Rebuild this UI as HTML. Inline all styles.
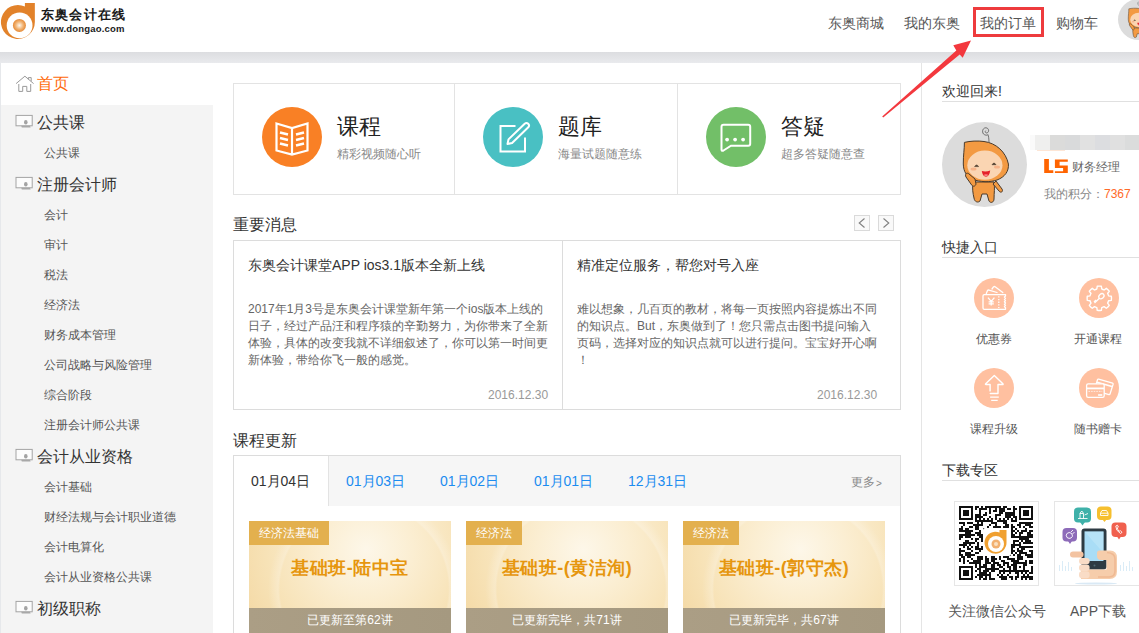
<!DOCTYPE html>
<html><head><meta charset="utf-8">
<style>
*{box-sizing:border-box;margin:0;padding:0}
html,body{width:1139px;height:633px;overflow:hidden;background:#fff}
body{position:relative;font-family:"Liberation Sans",sans-serif;color:#333}
.a{position:absolute;white-space:nowrap}
.t14{font-size:14px;line-height:14px}
.t12{font-size:12px;line-height:12px}
.t16{font-size:16px;line-height:16px}
.sh{left:37px;font-size:16px;line-height:16px;color:#333}
.ss{left:44px;font-size:12px;line-height:12px;color:#555}

.news{font-size:12px;line-height:17px;color:#666}
.date{font-size:12px;line-height:12px;color:#999}
.tab{top:474px;color:#1b8cf0}
.card{top:521px;width:202px;height:130px;overflow:hidden;background:radial-gradient(circle at 57% 52%,rgba(255,255,255,0) 0,rgba(255,255,255,0) 84px,rgba(255,255,255,0.22) 86px,rgba(255,255,255,0) 96px),radial-gradient(circle at 58% 22%,#fdf7e9 0,#fbeed2 30%,#f7e2b6 65%,#f2d49c 100%)}
.card .lbl{position:absolute;left:0;top:0;height:24px;padding:0 10px;background:#e3b04e;color:#fff;font-size:12px;line-height:24px}
.card .ttl{position:absolute;left:0;top:38px;width:202px;text-align:center;font-size:18px;line-height:18px;font-weight:bold;color:#e6960e;letter-spacing:0.5px}
.card .bot{position:absolute;left:0;top:87px;width:202px;height:30px;text-align:center;background:linear-gradient(90deg,#ab9e85,#a59980);color:#fff;font-size:12px;line-height:25px}
</style></head><body>

<!-- header -->
<svg class="a" style="left:0;top:0" width="40" height="42" viewBox="0 0 40 42">
  <defs>
    <radialGradient id="lg" cx="50%" cy="50%" r="50%"><stop offset="0" stop-color="#fff8ee"/><stop offset="0.55" stop-color="#f2b77a"/><stop offset="1" stop-color="#e68a35"/></radialGradient>
  </defs>
  <path d="M24.9 3 H34.85 V22 A16.95 16.95 0 1 1 24.9 6.56 Z" fill="#e2822a"/>
  <circle cx="19.6" cy="25.4" r="12.9" fill="#fff"/>
  <circle cx="19.4" cy="25.4" r="6.5" fill="url(#lg)"/>
</svg>
<div class="a" style="left:41px;top:8px;font-size:13px;line-height:13px;font-weight:bold;color:#1a1a1a;letter-spacing:1.2px">东奥会计在线</div>
<div class="a" style="left:41px;top:24px;font-size:9.5px;line-height:9.5px;font-weight:bold;color:#1a1a1a;letter-spacing:0.2px">www.dongao.com</div>

<div class="a t14" style="left:828px;top:16px;color:#555">东奥商城</div>
<div class="a t14" style="left:904px;top:16px;color:#555">我的东奥</div>
<div class="a t14" style="left:980px;top:16px;color:#555">我的订单</div>
<div class="a t14" style="left:1056px;top:16px;color:#555">购物车</div>
<div class="a" style="left:973px;top:7px;width:71px;height:30px;border:3px solid #ee3b3d"></div>

<!-- top avatar -->
<svg class="a" style="left:1118px;top:-1px" width="41" height="41" viewBox="0 0 85 85">
  <circle cx="42.5" cy="42.5" r="42.5" fill="#dcdcdc"/>
  <path d="M47 20.5 C47 17 46.5 14 46 12.5 C45.5 13.5 43 13.5 41.5 12 C39.5 9.5 41 5.5 44 5.8 C47 6 47.5 10 45 11 C43.5 11.3 42.5 9.5 43.8 8.6" fill="none" stroke="#666" stroke-width="0.9"/>
  <g stroke="#4a3b2c" stroke-width="1" stroke-linejoin="round">
    <path d="M31 60 C30 66 31 72 32 76 C32.5 80 36 81 38 79 L40 72 L45 72 L47 79 C48.5 81.5 52 80.5 52 77 C52 71 53 66 52 60 Z" fill="#f39a42"/>
    <path d="M51 62 L57 69 C59 71.5 61.5 69.5 60 67 L54 59 Z" fill="#f39a42"/>
    <path d="M22.4 20.4 C28 19 36 18.6 42 19.5 C54 21 64 30 66.4 42 C67 49 63 55 55 58 C48 60.5 38 60 31 57.5 C25 55 21.5 50 21.3 42 C21.2 33 22.5 27 22.4 20.4 Z" fill="#f39a42"/>
    <path d="M33 57 L27 52 C25 50 22.5 52 24 55 L30 63.5 C31.5 65 33.5 64 34 62 Z" fill="#f39a42"/>
  </g>
  <ellipse cx="42.9" cy="43.2" rx="17.6" ry="14.6" fill="#fad5b2"/>
  <path d="M32.6 44.6 Q34.6 41.4 36.6 44.6 Z M50 42.7 Q52 39.5 54 42.7 Z" fill="#4a3b2c" stroke="#4a3b2c" stroke-width="0.6"/>
  <path d="M39.8 49 Q44 50 48.2 48.5 Q47.5 54.5 44 54.8 Q40.5 54.6 39.8 49 Z" fill="#e5222a"/>
  <path d="M41.5 53 Q44 51.5 46.5 53 Q44 55 41.5 53Z" fill="#f98a8a"/>
  <ellipse cx="31.5" cy="47" rx="3" ry="1.6" fill="#f6b389"/>
  <ellipse cx="55" cy="45" rx="3" ry="1.6" fill="#f6b389"/>
</svg>

<!-- gray band -->
<div class="a" style="left:0;top:52px;width:1139px;height:11px;background:linear-gradient(#dcdde0,#e9eaed)"></div>
<div class="a" style="left:0;top:63px;width:1px;height:570px;background:#e6e8eb"></div>

<!-- sidebar -->
<div class="a" style="left:1px;top:105px;width:212px;height:528px;background:#f4f4f4"></div>

<svg class="a" style="left:15px;top:75px" width="20" height="18" viewBox="15 75 20 18"><path d="M16.1 83.6 L24.9 76.2 L33.6 83.6 M18.8 84 V91.4 H22.7 V86.4 H26.8 V91.4 H30.7 V84 M28.4 79.5 V77.6 H31.2 V81.3" fill="none" stroke="#9a9a9a" stroke-width="1"/></svg>
<div class="a sh" style="top:76px;color:#ff6a0a">首页</div>
<div class="a sh" style="top:115px">公共课</div>
<svg class="a" style="left:15px;top:114px" width="18" height="15" viewBox="0 0 18 15"><rect x="1" y="1.4" width="16.2" height="10.4" fill="#fcfcfc" stroke="#a3a3a3" stroke-width="1"/><ellipse cx="10.8" cy="8.3" rx="1.8" ry="2.3" fill="#a3a3a3"/><path d="M6.2 11.8 L15 11.8 L15.6 13.6 L6.8 13.6 Z" fill="#a8a8a8"/></svg>
<div class="a ss" style="top:147px">公共课</div>
<div class="a sh" style="top:177px">注册会计师</div>
<svg class="a" style="left:15px;top:176px" width="18" height="15" viewBox="0 0 18 15"><rect x="1" y="1.4" width="16.2" height="10.4" fill="#fcfcfc" stroke="#a3a3a3" stroke-width="1"/><ellipse cx="10.8" cy="8.3" rx="1.8" ry="2.3" fill="#a3a3a3"/><path d="M6.2 11.8 L15 11.8 L15.6 13.6 L6.8 13.6 Z" fill="#a8a8a8"/></svg>
<div class="a ss" style="top:209px">会计</div>
<div class="a ss" style="top:239px">审计</div>
<div class="a ss" style="top:269px">税法</div>
<div class="a ss" style="top:299px">经济法</div>
<div class="a ss" style="top:329px">财务成本管理</div>
<div class="a ss" style="top:359px">公司战略与风险管理</div>
<div class="a ss" style="top:389px">综合阶段</div>
<div class="a ss" style="top:419px">注册会计师公共课</div>
<div class="a sh" style="top:449px">会计从业资格</div>
<svg class="a" style="left:15px;top:448px" width="18" height="15" viewBox="0 0 18 15"><rect x="1" y="1.4" width="16.2" height="10.4" fill="#fcfcfc" stroke="#a3a3a3" stroke-width="1"/><ellipse cx="10.8" cy="8.3" rx="1.8" ry="2.3" fill="#a3a3a3"/><path d="M6.2 11.8 L15 11.8 L15.6 13.6 L6.8 13.6 Z" fill="#a8a8a8"/></svg>
<div class="a ss" style="top:481px">会计基础</div>
<div class="a ss" style="top:511px">财经法规与会计职业道德</div>
<div class="a ss" style="top:541px">会计电算化</div>
<div class="a ss" style="top:571px">会计从业资格公共课</div>
<div class="a sh" style="top:601px">初级职称</div>
<svg class="a" style="left:15px;top:600px" width="18" height="15" viewBox="0 0 18 15"><rect x="1" y="1.4" width="16.2" height="10.4" fill="#fcfcfc" stroke="#a3a3a3" stroke-width="1"/><ellipse cx="10.8" cy="8.3" rx="1.8" ry="2.3" fill="#a3a3a3"/><path d="M6.2 11.8 L15 11.8 L15.6 13.6 L6.8 13.6 Z" fill="#a8a8a8"/></svg>

<!-- feature box -->
<div class="a" style="left:233px;top:83px;width:668px;height:112px;border:1px solid #e3e3e3"></div>
<div class="a" style="left:454px;top:84px;width:1px;height:110px;background:#e3e3e3"></div>
<div class="a" style="left:677px;top:84px;width:1px;height:110px;background:#e3e3e3"></div>

<svg class="a" style="left:262px;top:107px" width="60" height="60" viewBox="0 0 60 60">
  <circle cx="30" cy="30" r="30" fill="#f98025"/>
  <g fill="none" stroke="#fff" stroke-width="2.2" stroke-linejoin="miter">
    <path d="M14.5 16.5 L30 21 L45.5 16.5 V43.5 L30 47.5 L14.5 43.5 Z M30 21 V47.5"/>
    <path d="M18 25.5 L26 27.5 M18 31 L26 33 M18 36.5 L26 38.5 M34 27.5 L42 25.5 M34 33 L42 31 M34 38.5 L42 36.5" stroke-width="2.4"/>
  </g>
</svg>
<div class="a" style="left:337px;top:116px;font-size:22px;line-height:22px;color:#222">课程</div>
<div class="a t12" style="left:337px;top:148px;color:#888">精彩视频随心听</div>

<svg class="a" style="left:483px;top:107px" width="60" height="60" viewBox="0 0 60 60">
  <circle cx="30" cy="30" r="30" fill="#49c0c3"/>
  <g fill="none" stroke="#fff" stroke-width="2.2">
    <path d="M32.5 19 H17.5 V44.5 H42 V30.5" stroke-width="2"/>
    <path d="M24.5 37 L25.5 32.4 L41.7 16.7 A2.55 2.55 0 0 1 45.3 20.3 L29.1 36 Z" stroke-width="2" stroke-linejoin="round"/>
  </g>
</svg>
<div class="a" style="left:558px;top:116px;font-size:22px;line-height:22px;color:#222">题库</div>
<div class="a t12" style="left:558px;top:148px;color:#888">海量试题随意练</div>

<svg class="a" style="left:706px;top:107px" width="60" height="60" viewBox="0 0 60 60">
  <circle cx="30" cy="30" r="30" fill="#72bf68"/>
  <path d="M17.5 17.7 H42.2 Q44.2 17.7 44.2 19.7 V36.7 Q44.2 38.7 42.2 38.7 H25 L17.5 43.5 Q15.5 44.5 15.5 42.5 V19.7 Q15.5 17.7 17.5 17.7 Z" fill="none" stroke="#fff" stroke-width="2"/>
  <circle cx="21.1" cy="32.6" r="1.9" fill="#fff"/><circle cx="29.1" cy="32.6" r="1.9" fill="#fff"/><circle cx="37.1" cy="32.6" r="1.9" fill="#fff"/>
</svg>
<div class="a" style="left:781px;top:116px;font-size:22px;line-height:22px;color:#222">答疑</div>
<div class="a t12" style="left:781px;top:148px;color:#888">超多答疑随意查</div>

<!-- news -->
<div class="a t16" style="left:233px;top:217px;color:#333">重要消息</div>
<div class="a" style="left:854px;top:215px;width:16px;height:16px;border:1px solid #dadada;background:#f9f9f9"></div>
<div class="a" style="left:878px;top:215px;width:16px;height:16px;border:1px solid #dadada;background:#f9f9f9"></div>
<svg class="a" style="left:854px;top:215px" width="40" height="16" viewBox="0 0 40 16"><path d="M10.5 3.5 L5.2 8 L10.5 12.5 M29.5 3.5 L34.8 8 L29.5 12.5" fill="none" stroke="#808080" stroke-width="1.1"/></svg>

<div class="a" style="left:233px;top:240px;width:668px;height:170px;border:1px solid #dcdcdc"></div>
<div class="a" style="left:562px;top:241px;width:1px;height:168px;background:#dcdcdc"></div>

<div class="a t14" style="left:248px;top:258px;color:#333">东奥会计课堂APP ios3.1版本全新上线</div>
<div class="a news" style="left:248px;top:301px">2017年1月3号是东奥会计课堂新年第一个ios版本上线的<br>日子，经过产品汪和程序猿的辛勤努力，为你带来了全新<br>体验，具体的改变我就不详细叙述了，你可以第一时间更<br>新体验，带给你飞一般的感觉。</div>
<div class="a date" style="left:488px;top:389px">2016.12.30</div>

<div class="a t14" style="left:577px;top:258px;color:#333">精准定位服务，帮您对号入座</div>
<div class="a news" style="left:577px;top:301px">难以想象，几百页的教材，将每一页按照内容提炼出不同<br>的知识点。But，东奥做到了！您只需点击图书提问输入<br>页码，选择对应的知识点就可以进行提问。宝宝好开心啊<br>！</div>
<div class="a date" style="left:817px;top:389px">2016.12.30</div>

<!-- course update -->
<div class="a t16" style="left:233px;top:433px;color:#333">课程更新</div>
<div class="a" style="left:233px;top:455px;width:668px;height:200px;border:1px solid #dcdcdc"></div>
<div class="a" style="left:234px;top:456px;width:666px;height:50px;background:#f6f6f6"></div>
<div class="a" style="left:234px;top:456px;width:95px;height:50px;background:#fff;border-right:1px solid #e3e3e3"></div>
<div class="a t14" style="left:251px;top:474px;color:#333">01月04日</div>
<div class="a t14 tab" style="left:346px">01月03日</div>
<div class="a t14 tab" style="left:440px">01月02日</div>
<div class="a t14 tab" style="left:534px">01月01日</div>
<div class="a t14 tab" style="left:628px">12月31日</div>
<div class="a t12" style="left:851px;top:476px;color:#888">更多<span style="font-size:10px;margin-left:1px;position:relative;top:1px">&gt;</span></div>

<div class="a card" style="left:249px"><div class="lbl">经济法基础</div><div class="ttl">基础班-陆中宝</div><div class="bot">已更新至第62讲</div></div>
<div class="a card" style="left:466px"><div class="lbl">经济法</div><div class="ttl">基础班-(黄洁洵)</div><div class="bot">已更新完毕，共71讲</div></div>
<div class="a card" style="left:683px"><div class="lbl">经济法</div><div class="ttl">基础班-(郭守杰)</div><div class="bot">已更新完毕，共67讲</div></div>


<!-- right separator -->
<div class="a" style="left:921px;top:63px;width:1px;height:570px;background:#e5e5e5"></div>

<!-- right column -->
<div class="a t14" style="left:942px;top:84px;color:#333">欢迎回来!</div>
<div class="a" style="left:942px;top:101px;width:197px;height:1px;background:#e0e0e0"></div>

<svg class="a" style="left:942px;top:122px" width="85" height="85" viewBox="0 0 85 85">
  <circle cx="42.5" cy="42.5" r="42.5" fill="#dcdcdc"/>
  <path d="M47 20.5 C47 17 46.5 14 46 12.5 C45.5 13.5 43 13.5 41.5 12 C39.5 9.5 41 5.5 44 5.8 C47 6 47.5 10 45 11 C43.5 11.3 42.5 9.5 43.8 8.6" fill="none" stroke="#666" stroke-width="0.9"/>
  <g stroke="#4a3b2c" stroke-width="1" stroke-linejoin="round">
    <path d="M31 60 C30 66 31 72 32 76 C32.5 80 36 81 38 79 L40 72 L45 72 L47 79 C48.5 81.5 52 80.5 52 77 C52 71 53 66 52 60 Z" fill="#f39a42"/>
    <path d="M51 62 L57 69 C59 71.5 61.5 69.5 60 67 L54 59 Z" fill="#f39a42"/>
    <path d="M22.4 20.4 C28 19 36 18.6 42 19.5 C54 21 64 30 66.4 42 C67 49 63 55 55 58 C48 60.5 38 60 31 57.5 C25 55 21.5 50 21.3 42 C21.2 33 22.5 27 22.4 20.4 Z" fill="#f39a42"/>
    <path d="M33 57 L27 52 C25 50 22.5 52 24 55 L30 63.5 C31.5 65 33.5 64 34 62 Z" fill="#f39a42"/>
  </g>
  <ellipse cx="42.9" cy="43.2" rx="17.6" ry="14.6" fill="#fad5b2"/>
  <path d="M32.6 44.6 Q34.6 41.4 36.6 44.6 Z M50 42.7 Q52 39.5 54 42.7 Z" fill="#4a3b2c" stroke="#4a3b2c" stroke-width="0.6"/>
  <path d="M39.8 49 Q44 50 48.2 48.5 Q47.5 54.5 44 54.8 Q40.5 54.6 39.8 49 Z" fill="#e5222a"/>
  <path d="M41.5 53 Q44 51.5 46.5 53 Q44 55 41.5 53Z" fill="#f98a8a"/>
  <ellipse cx="31.5" cy="47" rx="3" ry="1.6" fill="#f6b389"/>
  <ellipse cx="55" cy="45" rx="3" ry="1.6" fill="#f6b389"/>
</svg>


<div class="a" style="left:1035px;top:135px;width:104px;height:15px;background:linear-gradient(90deg,#efefee 0px,#efefee 15px,#dbdbda 15px,#dbdbda 30px,#d9dadb 30px,#d9dadb 45px,#e1e1e1 45px,#e1e1e1 60px,#dcdde0 60px,#dcdde0 75px,#e0e0e0 75px,#e0e0e0 90px,#dbdcdc 90px,#dbdcdc 105px)"></div>
<div class="a" style="left:1030px;top:135px;width:5px;height:15px;background:#fafafa"></div>
<div class="a" style="left:1037px;top:150px;width:28px;height:1px;background:#fde6d6"></div>
<svg class="a" style="left:1044px;top:159px" width="24" height="14" viewBox="0 0 24 14"><path d="M0.2 0 H4.9 V11.3 H9.3 V14 H0.2 Z M10.9 0.5 H23.8 V2.7 H15.6 V6.5 H23.8 V14 H10.9 V12.2 H19.1 V8.9 H10.9 Z" fill="#ff6400"/></svg>
<div class="a t12" style="left:1072px;top:161px;color:#666">财务经理</div>
<div class="a t12" style="left:1044px;top:188px;color:#888">我的积分：<span style="color:#ff6a2a">7367</span></div>

<div class="a t14" style="left:942px;top:240px;color:#333">快捷入口</div>
<div class="a" style="left:942px;top:257px;width:197px;height:1px;background:#e0e0e0"></div>

<svg class="a" style="left:974px;top:278px" width="40" height="40" viewBox="0 0 40 40">
  <circle cx="20" cy="20" r="20" fill="#ffc0a0"/>
  <g fill="none" stroke="#fff" stroke-width="1.3" stroke-linejoin="round" stroke-linecap="round">
    <path d="M12.3 15.6 L13.5 12.6 Q14 11.8 15 12.1 L23 14.5"/>
    <path d="M18 11 L19.5 8.9 Q20.3 8.2 21.1 8.7 L28.8 14.6"/>
    <path d="M10.4 16.6 H31.5 V18 L30.4 19 L31.5 20.2 L30.4 21.4 L31.5 22.6 L30.4 23.8 L31.5 25 L30.4 26.2 L31.5 27.4 L30.4 28.6 L31.5 29.8 V31.3 H10.4 Q9 31.3 9 29.9 V18 Q9 16.6 10.4 16.6 Z"/>
    <path d="M24.8 18.2 V30" stroke-dasharray="1.3 1.4" stroke-linecap="butt"/>
    <path d="M14 19.6 L17.2 23.4 L20.4 19.6 M17.2 23.4 V27.6 M14.6 23.8 H19.8 M14.6 25.8 H19.8" stroke-linecap="butt"/>
  </g>
</svg>
<svg class="a" style="left:1079px;top:278px" width="40" height="40" viewBox="0 0 40 40">
  <circle cx="20" cy="20" r="20" fill="#ffc0a0"/>
  <path d="M17.83 11.02 L18.24 8.28 A12.2 12.2 0 0 1 22.36 8.28 L22.77 11.02 A9.6 9.6 0 0 1 25.11 11.99 L27.34 10.34 A12.2 12.2 0 0 1 30.26 13.26 L28.61 15.49 A9.6 9.6 0 0 1 29.58 17.83 L32.32 18.24 A12.2 12.2 0 0 1 32.32 22.36 L29.58 22.77 A9.6 9.6 0 0 1 28.61 25.11 L30.26 27.34 A12.2 12.2 0 0 1 27.34 30.26 L25.11 28.61 A9.6 9.6 0 0 1 22.77 29.58 L22.36 32.32 A12.2 12.2 0 0 1 18.24 32.32 L17.83 29.58 A9.6 9.6 0 0 1 15.49 28.61 L13.26 30.26 A12.2 12.2 0 0 1 10.34 27.34 L11.99 25.11 A9.6 9.6 0 0 1 11.02 22.77 L8.28 22.36 A12.2 12.2 0 0 1 8.28 18.24 L11.02 17.83 A9.6 9.6 0 0 1 11.99 15.49 L10.34 13.26 A12.2 12.2 0 0 1 13.26 10.34 L15.49 11.99 A9.6 9.6 0 0 1 17.83 11.02 Z" fill="none" stroke="#fff" stroke-width="1.4" stroke-linejoin="round"/>
  <ellipse cx="22.4" cy="18.2" rx="2.9" ry="2.2" transform="rotate(-40 22.4 18.2)" fill="none" stroke="#fff" stroke-width="1.3"/>
  <path d="M20.4 20.2 L15.5 25 M17.2 23.2 L16 22 M16.2 24.2 L15 23" fill="none" stroke="#fff" stroke-width="1.3"/>
</svg>
<div class="a t12" style="left:976px;top:333px;color:#555">优惠券</div>
<div class="a t12" style="left:1074px;top:333px;color:#555">开通课程</div>

<svg class="a" style="left:974px;top:368px" width="40" height="40" viewBox="0 0 40 40">
  <circle cx="20" cy="20" r="20" fill="#ffc0a0"/>
  <path d="M16.1 22.9 V16.5 H12 Q11 16.5 11.7 15.8 L20.3 7.4 L28.9 15.8 Q29.5 16.5 28.5 16.5 H24 V25.5 H16.3" fill="none" stroke="#fff" stroke-width="1.4" stroke-linejoin="round" stroke-linecap="round"/>
  <path d="M16.1 29.1 H24.8 M17.2 32.4 H23.7" stroke="#fff" stroke-width="1.4"/>
</svg>
<svg class="a" style="left:1079px;top:368px" width="40" height="40" viewBox="0 0 40 40">
  <circle cx="20" cy="20" r="20" fill="#ffc0a0"/>
  <g fill="#ffc0a0" stroke="#fff" stroke-width="1.3" stroke-linejoin="round">
    <path d="M19.6 11.2 L33.6 15.2 Q34.3 15.5 34.1 16.2 L31 26.1 Q30.7 26.8 30 26.6 L16 22.6 Q15.3 22.3 15.5 21.6 L18.5 11.7 Q18.8 11 19.6 11.2 Z"/>
    <path d="M18 14.2 L33 18.5" fill="none" stroke-width="1.6"/>
    <rect x="7.6" y="15.8" width="17.6" height="13.6" rx="1.6"/>
  </g>
  <path d="M7.8 20.4 H25" stroke="#fff" stroke-width="1.8"/>
  <path d="M9.5 23.4 H23.2" stroke="#fff" stroke-width="0.7" stroke-dasharray="1.6 1"/>
  <rect x="19.1" y="26.2" width="4.2" height="1.6" fill="#fff"/>
</svg>
<div class="a t12" style="left:970px;top:423px;color:#555">课程升级</div>
<div class="a t12" style="left:1074px;top:423px;color:#555">随书赠卡</div>

<div class="a t14" style="left:942px;top:463px;color:#333">下载专区</div>
<div class="a" style="left:942px;top:480px;width:197px;height:1px;background:#e0e0e0"></div>

<div class="a" style="left:954px;top:501px;width:85px;height:85px;border:1px solid #e6e6e6;background:#fff"></div>
<div class="a" style="left:1054px;top:501px;width:86px;height:85px;border:1px solid #e6e6e6;background:#fff"></div>
<svg class="a" style="left:959px;top:506px" width="74" height="74" viewBox="0 0 74 74" shape-rendering="crispEdges"><path d="M0 0h14v2h-14zM16 0h4v2h-4zM22 0h2v2h-2zM26 0h16v2h-16zM44 0h4v2h-4zM54 0h2v2h-2zM60 0h14v2h-14zM0 2h2v2h-2zM12 2h2v2h-2zM16 2h2v2h-2zM20 2h8v2h-8zM30 2h2v2h-2zM36 2h2v2h-2zM40 2h6v2h-6zM48 2h4v2h-4zM54 2h4v2h-4zM60 2h2v2h-2zM72 2h2v2h-2zM0 4h2v2h-2zM4 4h6v2h-6zM12 4h2v2h-2zM20 4h2v2h-2zM30 4h2v2h-2zM34 4h4v2h-4zM40 4h6v2h-6zM54 4h2v2h-2zM60 4h2v2h-2zM64 4h6v2h-6zM72 4h2v2h-2zM0 6h2v2h-2zM4 6h6v2h-6zM12 6h2v2h-2zM20 6h2v2h-2zM26 6h2v2h-2zM30 6h2v2h-2zM40 6h4v2h-4zM46 6h10v2h-10zM60 6h2v2h-2zM64 6h6v2h-6zM72 6h2v2h-2zM0 8h2v2h-2zM4 8h6v2h-6zM12 8h2v2h-2zM16 8h6v2h-6zM24 8h4v2h-4zM36 8h6v2h-6zM46 8h10v2h-10zM60 8h2v2h-2zM64 8h6v2h-6zM72 8h2v2h-2zM0 10h2v2h-2zM12 10h2v2h-2zM16 10h8v2h-8zM30 10h2v2h-2zM36 10h2v2h-2zM46 10h6v2h-6zM54 10h4v2h-4zM60 10h2v2h-2zM72 10h2v2h-2zM0 12h14v2h-14zM16 12h2v2h-2zM20 12h2v2h-2zM24 12h2v2h-2zM28 12h2v2h-2zM32 12h2v2h-2zM36 12h2v2h-2zM40 12h2v2h-2zM44 12h2v2h-2zM48 12h2v2h-2zM52 12h2v2h-2zM56 12h2v2h-2zM60 12h14v2h-14zM16 14h18v2h-18zM38 14h10v2h-10zM52 14h6v2h-6zM0 16h6v2h-6zM8 16h6v2h-6zM18 16h2v2h-2zM22 16h2v2h-2zM32 16h6v2h-6zM44 16h4v2h-4zM60 16h14v2h-14zM4 18h2v2h-2zM14 18h10v2h-10zM30 18h2v2h-2zM36 18h2v2h-2zM46 18h4v2h-4zM52 18h2v2h-2zM58 18h4v2h-4zM66 18h6v2h-6zM2 20h2v2h-2zM10 20h4v2h-4zM16 20h4v2h-4zM28 20h2v2h-2zM34 20h8v2h-8zM44 20h6v2h-6zM52 20h4v2h-4zM60 20h2v2h-2zM64 20h2v2h-2zM70 20h4v2h-4zM0 22h4v2h-4zM6 22h4v2h-4zM16 22h4v2h-4zM24 22h2v2h-2zM28 22h4v2h-4zM34 22h2v2h-2zM42 22h2v2h-2zM46 22h4v2h-4zM52 22h2v2h-2zM56 22h2v2h-2zM66 22h2v2h-2zM0 24h14v2h-14zM20 24h2v2h-2zM26 24h2v2h-2zM32 24h2v2h-2zM36 24h4v2h-4zM44 24h12v2h-12zM58 24h2v2h-2zM62 24h6v2h-6zM70 24h4v2h-4zM6 26h6v2h-6zM16 26h6v2h-6zM26 26h4v2h-4zM36 26h4v2h-4zM42 26h4v2h-4zM52 26h2v2h-2zM56 26h2v2h-2zM60 26h4v2h-4zM68 26h4v2h-4zM0 28h16v2h-16zM18 28h14v2h-14zM36 28h4v2h-4zM42 28h2v2h-2zM46 28h4v2h-4zM52 28h4v2h-4zM60 28h2v2h-2zM68 28h6v2h-6zM0 30h4v2h-4zM6 30h6v2h-6zM20 30h14v2h-14zM40 30h2v2h-2zM44 30h30v2h-30zM0 32h2v2h-2zM12 32h2v2h-2zM16 32h4v2h-4zM22 32h2v2h-2zM28 32h2v2h-2zM40 32h2v2h-2zM44 32h2v2h-2zM60 32h10v2h-10zM6 34h4v2h-4zM16 34h2v2h-2zM22 34h2v2h-2zM26 34h6v2h-6zM34 34h2v2h-2zM40 34h6v2h-6zM54 34h6v2h-6zM62 34h2v2h-2zM66 34h6v2h-6zM4 36h12v2h-12zM18 36h2v2h-2zM24 36h4v2h-4zM32 36h6v2h-6zM40 36h2v2h-2zM44 36h2v2h-2zM50 36h2v2h-2zM54 36h2v2h-2zM60 36h2v2h-2zM64 36h10v2h-10zM0 38h8v2h-8zM10 38h2v2h-2zM18 38h2v2h-2zM26 38h6v2h-6zM36 38h10v2h-10zM48 38h2v2h-2zM52 38h10v2h-10zM4 40h2v2h-2zM8 40h2v2h-2zM12 40h2v2h-2zM16 40h4v2h-4zM22 40h8v2h-8zM34 40h2v2h-2zM38 40h2v2h-2zM42 40h8v2h-8zM52 40h4v2h-4zM60 40h14v2h-14zM0 42h2v2h-2zM8 42h4v2h-4zM16 42h8v2h-8zM26 42h4v2h-4zM34 42h10v2h-10zM50 42h4v2h-4zM58 42h2v2h-2zM62 42h4v2h-4zM0 44h6v2h-6zM12 44h2v2h-2zM20 44h2v2h-2zM24 44h2v2h-2zM28 44h2v2h-2zM34 44h6v2h-6zM44 44h4v2h-4zM52 44h4v2h-4zM58 44h6v2h-6zM70 44h4v2h-4zM0 46h2v2h-2zM6 46h6v2h-6zM16 46h4v2h-4zM24 46h8v2h-8zM34 46h2v2h-2zM40 46h4v2h-4zM46 46h2v2h-2zM50 46h4v2h-4zM56 46h2v2h-2zM60 46h8v2h-8zM72 46h2v2h-2zM0 48h4v2h-4zM6 48h10v2h-10zM26 48h4v2h-4zM34 48h2v2h-2zM38 48h14v2h-14zM54 48h2v2h-2zM58 48h4v2h-4zM66 48h8v2h-8zM2 50h4v2h-4zM8 50h4v2h-4zM18 50h6v2h-6zM26 50h2v2h-2zM32 50h4v2h-4zM40 50h2v2h-2zM44 50h6v2h-6zM58 50h6v2h-6zM68 50h6v2h-6zM0 52h2v2h-2zM4 52h2v2h-2zM12 52h2v2h-2zM18 52h6v2h-6zM26 52h4v2h-4zM32 52h6v2h-6zM40 52h2v2h-2zM48 52h8v2h-8zM58 52h6v2h-6zM0 54h2v2h-2zM4 54h2v2h-2zM8 54h2v2h-2zM14 54h8v2h-8zM26 54h4v2h-4zM32 54h4v2h-4zM42 54h4v2h-4zM52 54h8v2h-8zM66 54h2v2h-2zM70 54h4v2h-4zM4 56h2v2h-2zM10 56h12v2h-12zM26 56h6v2h-6zM34 56h6v2h-6zM44 56h6v2h-6zM54 56h14v2h-14zM70 56h4v2h-4zM16 58h2v2h-2zM20 58h2v2h-2zM24 58h4v2h-4zM32 58h4v2h-4zM38 58h4v2h-4zM44 58h2v2h-2zM48 58h2v2h-2zM52 58h6v2h-6zM64 58h4v2h-4zM0 60h14v2h-14zM16 60h2v2h-2zM20 60h8v2h-8zM32 60h4v2h-4zM40 60h4v2h-4zM48 60h4v2h-4zM54 60h4v2h-4zM60 60h2v2h-2zM64 60h2v2h-2zM72 60h2v2h-2zM0 62h2v2h-2zM12 62h2v2h-2zM18 62h4v2h-4zM26 62h14v2h-14zM44 62h2v2h-2zM50 62h2v2h-2zM54 62h4v2h-4zM64 62h2v2h-2zM72 62h2v2h-2zM0 64h2v2h-2zM4 64h6v2h-6zM12 64h2v2h-2zM16 64h2v2h-2zM20 64h2v2h-2zM24 64h6v2h-6zM32 64h4v2h-4zM40 64h30v2h-30zM72 64h2v2h-2zM0 66h2v2h-2zM4 66h6v2h-6zM12 66h2v2h-2zM20 66h8v2h-8zM30 66h2v2h-2zM40 66h2v2h-2zM44 66h2v2h-2zM50 66h2v2h-2zM56 66h4v2h-4zM62 66h2v2h-2zM66 66h2v2h-2zM70 66h4v2h-4zM0 68h2v2h-2zM4 68h6v2h-6zM12 68h2v2h-2zM18 68h14v2h-14zM38 68h2v2h-2zM42 68h2v2h-2zM48 68h2v2h-2zM58 68h2v2h-2zM64 68h2v2h-2zM68 68h2v2h-2zM0 70h2v2h-2zM12 70h2v2h-2zM16 70h2v2h-2zM20 70h4v2h-4zM26 70h2v2h-2zM30 70h2v2h-2zM40 70h8v2h-8zM50 70h4v2h-4zM56 70h4v2h-4zM62 70h12v2h-12zM0 72h14v2h-14zM20 72h2v2h-2zM24 72h4v2h-4zM30 72h6v2h-6zM42 72h6v2h-6zM52 72h2v2h-2zM56 72h2v2h-2zM62 72h2v2h-2zM66 72h2v2h-2zM70 72h4v2h-4z" fill="#111"/></svg>
<svg class="a" style="left:983px;top:528px" width="28" height="28" viewBox="0 0 28 28">
  <rect x="0" y="0" width="28" height="28" fill="#fff" rx="2"/>
  <path d="M16.5 2 H23.5 V14 A11 11 0 1 1 16.5 4.4 Z" fill="#f0a030"/>
  <circle cx="13" cy="16" r="8" fill="#fff"/>
  <circle cx="13" cy="16" r="4.5" fill="#f2b070"/>
  <circle cx="13" cy="16" r="2" fill="#fbe0c0"/>
</svg>
<svg class="a" style="left:1054px;top:501px" width="85" height="85" viewBox="0 0 85 85">
  <g stroke="#d6eaf6" stroke-width="0.9">
    <path d="M5.5 70V64 M8.5 70V60 M11.5 70V65 M14.5 70V61 M17.5 70V66 M66.5 70V64 M69.5 70V61 M72.5 70V65 M75.5 70V60 M78.5 70V66"/>
  </g>
  <ellipse cx="42" cy="82.5" rx="21" ry="1" fill="#d9e9f5"/>
  <rect x="20" y="6.5" width="17" height="15" rx="4" fill="#3fb1a9"/><path d="M26 21 L28.5 24.5 L31 21Z" fill="#3fb1a9"/>
  <path d="M24 17.5 H33.5 M26 17.5 V12.5 H29.5 V17.5 M25.8 12.5 L27.8 10 L29.7 12.5 M30.5 14 L34 12.5" fill="none" stroke="#fff" stroke-width="0.9"/>
  <rect x="43" y="5.5" width="14.5" height="13.5" rx="4" fill="#f6bf2e"/><path d="M48.5 18.5 L50.5 21 L52.5 18.5Z" fill="#f6bf2e"/>
  <path d="M46.5 14.5 V12 L48 9.5 H52.5 L54 12 V14.5 Z M46.5 12.2 H54" fill="none" stroke="#fff" stroke-width="0.9"/>
  <rect x="57.5" y="21.5" width="15" height="14.5" rx="4" fill="#f0604e"/><path d="M63 35.5 L65 38.5 L67 35.5Z" fill="#f0604e"/>
  <path d="M61.8 25 Q61.5 29.5 66.5 32.5 L68 31.3 L66.4 29.6 L65.2 30.3 Q63.5 28.8 63.3 26.8 L64.4 26.1 L63.4 24.2 Z" fill="none" stroke="#fff" stroke-width="0.9"/>
  <rect x="8.5" y="27" width="14.5" height="13.5" rx="4" fill="#8d6bb9"/><path d="M14 40 L16 43 L18 40Z" fill="#8d6bb9"/>
  <path d="M13 36.5 Q11 34 13.5 32 Q16 30.5 18 33 Q19.5 35.5 17 37 Q15 38 13 36.5 M17 31 L19 29 M18.5 32.5 L20.5 31.5" fill="none" stroke="#fff" stroke-width="0.9"/>
  <rect x="27.5" y="27.5" width="25" height="41" rx="3" fill="#2d3b43"/>
  <rect x="30.5" y="30.5" width="19" height="29.5" fill="#a9ddf6"/>
  <path d="M30.5 30.5 L49.5 52 V30.5Z" fill="#c2e8f9" opacity="0.6"/>
  <circle cx="40.5" cy="64.5" r="1" fill="#4f6a75"/>
  <rect x="16" y="50.4" width="13.5" height="6" rx="3" fill="#f3c3a1"/>
  <path d="M43 52 Q43 49.5 45.5 49.5 H56 Q63 49.5 63 57 V70.5 Q63 78 55.5 78 H27 V68.5 H52.5 V59 H47 Q43 59 43 55 Z" fill="#f6cdab"/>
  <path d="M53 51.5 Q61 52 61 58 V70 Q61 76 55 76 H44" fill="none" stroke="#efb993" stroke-width="1.6"/>
  <rect x="25" y="57" width="10.6" height="6.3" rx="3" fill="#f9dcc6"/>
  <rect x="25" y="63.6" width="10.6" height="6.3" rx="3" fill="#f9dcc6"/>
  <rect x="25" y="70.2" width="10.6" height="7" rx="3" fill="#f9dcc6"/>
</svg>

<div class="a t14" style="left:948px;top:604px;color:#555">关注微信公众号</div>
<div class="a t14" style="left:1070px;top:604px;color:#555">APP下载</div>

<!-- arrow -->
<svg class="a" style="left:0;top:0" width="1139" height="633" viewBox="0 0 1139 633">
  <path d="M882.2 116.6 L956.3 50.6 L953.3 45.3 L971 40.5 L962.7 57.7 L959.7 54.4 L883.2 117.6 Z" fill="#f3383e"/>
</svg>

</body></html>
